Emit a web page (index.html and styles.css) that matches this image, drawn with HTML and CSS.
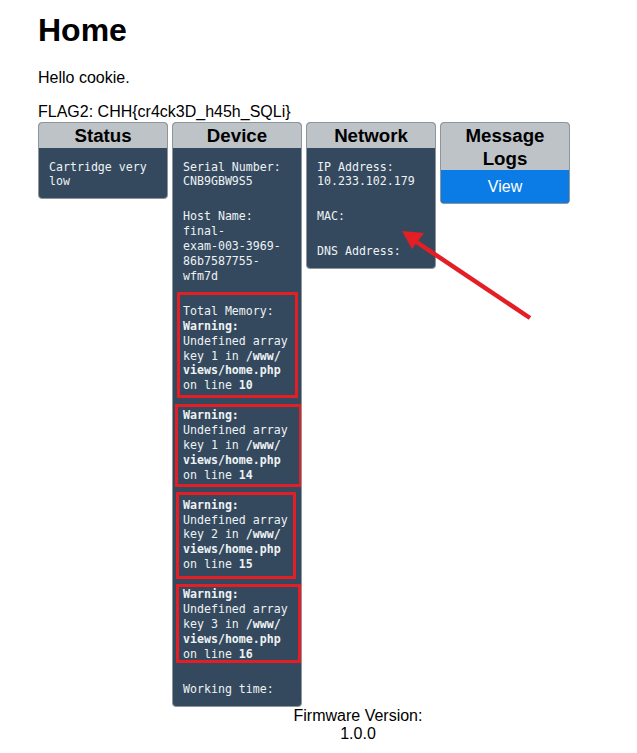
FILE: index.html
```html
<!DOCTYPE html>
<html>
<head>
<meta charset="utf-8">
<title>Home</title>
<link rel="stylesheet" href="styles.css">
</head>
<body>
<div class="page">
  <h1 class="title">Home</h1>
  <p class="hello">Hello cookie.</p>
  <p class="flag">FLAG2: CHH{cr4ck3D_h45h_SQLi}</p>
  <div class="cards">
    <div class="card">
      <div class="card-head">Status</div>
      <div class="card-body">
        <p>Cartridge very low</p>
      </div>
    </div>
    <div class="card card-device">
      <div class="card-head">Device</div>
      <div class="card-body">
        <p>Serial Number:<br>CNB9GBW9S5</p>
        <p>Host Name:<br><span class="nw">final-</span><wbr><span class="nw">exam-003-3969-</span><wbr><span class="nw">86b7587755-</span><wbr><span class="nw">wfm7d</span></p>
        <p>Total Memory: <br><b>Warning:</b> Undefined array key 1 in <b>/www/<wbr>views/home.php</b> on line <b>10</b><br><br><b>Warning:</b> Undefined array key 1 in <b>/www/<wbr>views/home.php</b> on line <b>14</b><br><br><b>Warning:</b> Undefined array key 2 in <b>/www/<wbr>views/home.php</b> on line <b>15</b><br><br><b>Warning:</b> Undefined array key 3 in <b>/www/<wbr>views/home.php</b> on line <b>16</b></p>
        <p>Working time:</p>
      </div>
      <div class="mark mark-1"></div>
      <div class="mark mark-2"></div>
      <div class="mark mark-3"></div>
      <div class="mark mark-4"></div>
    </div>
    <div class="card">
      <div class="card-head">Network</div>
      <div class="card-body">
        <p>IP Address:<br>10.233.102.179</p>
        <p>MAC:</p>
        <p>DNS Address:</p>
      </div>
    </div>
    <div class="card">
      <div class="card-head">Message Logs</div>
      <a class="view-btn" href="#">View</a>
    </div>
  </div>
  <div class="footer">Firmware Version: 1.0.0</div>
  <svg class="arrow" width="140" height="105" viewBox="0 0 140 105">
    <line x1="135" y1="96" x2="17" y2="17" stroke="#e31e24" stroke-width="4.5"/>
    <polygon points="7,9 29,11 17,27" fill="#e31e24"/>
  </svg>
</div>
</body>
</html>
```
FILE: styles.css
```css
html, body {
  margin: 0;
  padding: 0;
  background: #ffffff;
}

.page {
  position: relative;
  padding: 0 38px;
  font-family: "Liberation Sans", Arial, sans-serif;
  font-size: 16px;
  color: #000;
}

.title {
  font-size: 32px;
  font-weight: bold;
  margin: 12px 0 20px;
}

.hello {
  margin: 0 0 16px;
}

.flag {
  margin: 0;
}

.cards {
  display: flex;
  align-items: flex-start;
  gap: 4px;
  margin-top: 1px;
}

.card {
  position: relative;
  width: 130px;
  box-sizing: border-box;
  border: 1px solid #8c969b;
  border-radius: 4px;
  overflow: hidden;
  background: #34495e;
}

.card-head {
  background: #bdc3c7;
  text-align: center;
  font-weight: bold;
  font-size: 18.7px;
  line-height: 22.5px;
  padding: 2px 0 0;
}

.card-body {
  padding: 12px 9px 9px 10px;
  font-family: "DejaVu Sans Mono", "Liberation Mono", monospace;
  font-size: 11.6px;
  line-height: 14.9px;
  color: #eef2f4;
}

.card-body p {
  margin: 0 0 20px;
}

.card-body p:last-child {
  margin-bottom: 0;
}

.card-body b {
  font-weight: bold;
}

.nw {
  white-space: nowrap;
}

.view-btn {
  display: block;
  background: #0b7be6;
  color: #ffffff;
  text-align: center;
  text-decoration: none;
  font-size: 16px;
  line-height: 18.4px;
  padding: 8px 0 7px;
}

.mark {
  position: absolute;
  border: 3px solid #e31e24;
  box-sizing: border-box;
}

.mark-1 { left: 4px; top: 169px; width: 121px; height: 106px; }
.mark-2 { left: 2px; top: 281px; width: 127px; height: 83px; }
.mark-3 { left: 3px; top: 369px; width: 120px; height: 87px; }
.mark-4 { left: 3px; top: 461px; width: 125px; height: 79px; }

.footer {
  width: 132px;
  margin-left: 254px;
  text-align: center;
  line-height: 18.4px;
}

.arrow {
  position: absolute;
  left: 395px;
  top: 210px;
}
```
